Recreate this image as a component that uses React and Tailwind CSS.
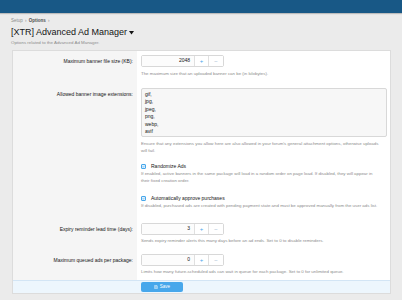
export default function App() {
  return (
    <div className="w-[402px] h-[300px] overflow-hidden bg-[#ebebeb] font-['Liberation_Sans',Arial,sans-serif] text-[#141414]">
      {/* header bar */}
      <div className="h-[13px] bg-[#185886] shadow-[0_1px_1px_rgba(0,0,0,0.2)]" />

      {/* page title area */}
      <div className="px-[11px]">
        <div className="mt-[5px] h-[6px] leading-[6px] text-[4.5px] text-[#8c8c8c]">
          Setup <span className="mx-[1px]">›</span> <span className="font-bold text-[#505050]">Options</span> <span className="ml-[1px]">›</span>
        </div>
        <div className="mt-[3px] h-[11px] leading-[11px] text-[9px] flex items-center">
          <span>[XTR] Advanced Ad Manager</span>
          <svg width="5" height="4" viewBox="0 0 10 8" className="ml-[2px] mt-[1px]">
            <path d="M0 0 L10 0 L5 7 Z" fill="#141414" />
          </svg>
        </div>
        <div className="mt-[2px] h-[6px] leading-[6px] text-[4.4px] text-[#8c8c8c]">
          Options related to the Advanced Ad Manager.
        </div>
      </div>

      {/* options panel */}
      <div className="mx-[12px] mt-[4px] w-[379px] bg-white border border-[#dcdcdc] border-b-0">
        <Row label="Maximum banner file size (KB):" pt="pt-[4px]" pb="pb-[5px]" lpt="pt-[6.5px]">
          <Spinner value="2048" />
          <Hint className="mt-[3px] whitespace-nowrap">
            The maximum size that an uploaded banner can be (in kilobytes).
          </Hint>
        </Row>

        <Row label="Allowed banner image extensions:" pt="pt-[6px]" pb="pb-[2px]" lpt="pt-[8.5px]">
          <div className="h-[49px] border border-[#d8d8d8] bg-[#f7f7f7] rounded-[2px] px-[3px] pt-[2px] text-[5px] leading-[7.4px] text-[#141414]">
            gif,<br />jpg,<br />jpeg,<br />png,<br />webp,<br />avif
          </div>
          <Hint className="mt-[3px]">
            Ensure that any extensions you allow here are also allowed in your forum's general attachment options, otherwise uploads
            <br />
            will fail.
          </Hint>
        </Row>

        <Row label="" pt="pt-[7px]" pb="pb-[5px]">
          <Check label="Randomize Ads" />
          <Hint className="mt-[1px]">
            If enabled, active banners in the same package will load in a random order on page load. If disabled, they will appear in
            <br />
            their fixed creation order.
          </Hint>
        </Row>

        <Row label="" pt="pt-[6px]" pb="pb-[5px]">
          <Check label="Automatically approve purchases" />
          <Hint className="mt-[1px] whitespace-nowrap">
            If disabled, purchased ads are created with pending payment state and must be approved manually from the user ads list.
          </Hint>
        </Row>

        <Row label="Expiry reminder lead time (days):" pt="pt-[9px]" pb="pb-[5px]" lpt="pt-[11.5px]">
          <Spinner value="3" />
          <Hint className="mt-[2px] whitespace-nowrap">
            Sends expiry reminder alerts this many days before an ad ends. Set to 0 to disable reminders.
          </Hint>
        </Row>

        <Row label="Maximum queued ads per package:" pt="pt-[5px]" pb="pb-[5px]" lpt="pt-[7.5px]">
          <Spinner value="0" />
          <Hint className="mt-[2px] whitespace-nowrap">
            Limits how many future-scheduled ads can wait in queue for each package. Set to 0 for unlimited queue.
          </Hint>
        </Row>

        {/* submit row */}
        <div className="h-[14px] bg-[#edf6fd] border-t border-[#d3e5f5] border-b border-b-[#dcdcdc] flex items-center pl-[128px]">
          <button className="w-[42px] h-[10px] rounded-[2px] bg-[#47a7eb] text-white text-[4.5px] flex items-center justify-center gap-[2px]">
            <svg width="4" height="4" viewBox="0 0 16 16" fill="none" stroke="white" strokeWidth="1.6">
              <path d="M2 2h10l2 2v10H2z" />
              <path d="M5 2v4h6V2" />
              <path d="M5 14v-5h6v5" />
            </svg>
            <span>Save</span>
          </button>
        </div>
      </div>
    </div>
  );
}

function Row({ label, pt, pb, lpt, children }) {
  return (
    <div className="flex">
      <div className={`w-[124px] shrink-0 bg-[#f5f5f5] text-right pr-[4px] text-[5px] leading-[7px] ${lpt || ""}`}>
        {label}
      </div>
      <div className={`flex-1 pl-[4px] pr-[3px] ${pt} ${pb}`}>{children}</div>
    </div>
  );
}

function Hint({ className, children }) {
  return (
    <div className={`text-[4.4px] leading-[7px] text-[#8c8c8c] ${className || ""}`}>{children}</div>
  );
}

function Spinner({ value }) {
  return (
    <div className="flex h-[12px] w-[83px] border border-[#d8d8d8] rounded-[2px] bg-[#fafafa] text-[5px]">
      <div className="w-[52px] flex items-center justify-end pr-[4px] text-[#141414] bg-[#fcfcfc]">{value}</div>
      <div className="w-[14px] border-l border-[#e0e0e0] flex items-center justify-center text-[#47a7eb] text-[6px] bg-white">+</div>
      <div className="flex-1 border-l border-[#e0e0e0] flex items-center justify-center text-[#9bb7cf] text-[6px] bg-white">−</div>
    </div>
  );
}

function Check({ label }) {
  return (
    <div className="flex items-center h-[6px] text-[5px] leading-[6px]">
      <div className="w-[5px] h-[5px] border border-[#47a7eb] bg-[#e3f1fc] rounded-[1px] flex items-center justify-center">
        <svg width="3" height="3" viewBox="0 0 10 10" fill="none" stroke="#47a7eb" strokeWidth="2">
          <path d="M1.5 5 L4 7.5 L8.5 2.5" />
        </svg>
      </div>
      <span className="ml-[5px]">{label}</span>
    </div>
  );
}
